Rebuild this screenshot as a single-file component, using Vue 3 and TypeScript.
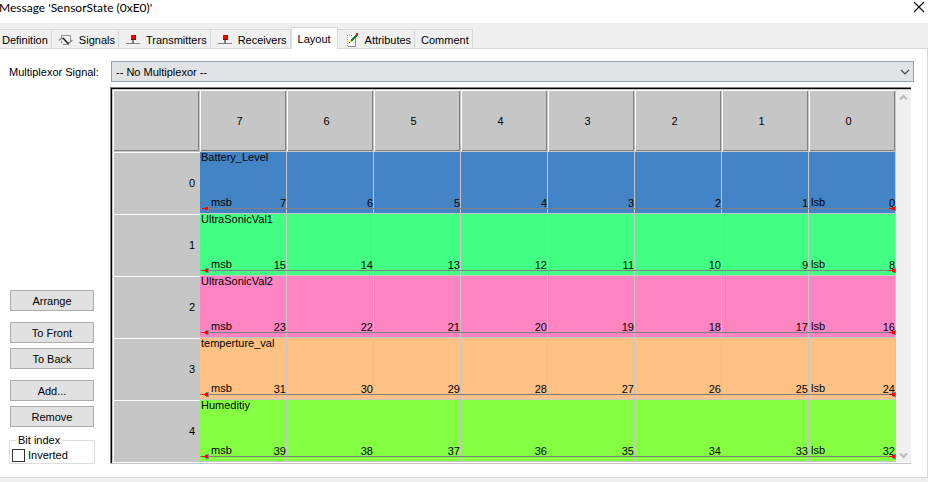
<script setup lang="ts">
import { ref } from 'vue'

interface Tab { id: string; label: string; icon?: 'wave' | 'node' | 'note' }
interface Signal { name: string; color: string }

const tabs: Tab[] = [
  { id: 'definition', label: 'Definition' },
  { id: 'signals', label: 'Signals', icon: 'wave' },
  { id: 'transmitters', label: 'Transmitters', icon: 'node' },
  { id: 'receivers', label: 'Receivers', icon: 'node' },
  { id: 'layout', label: 'Layout' },
  { id: 'attributes', label: 'Attributes', icon: 'note' },
  { id: 'comment', label: 'Comment' },
]
const active = ref('layout')
const multiplexor = ref('none')
const inverted = ref(false)

const bits = [7, 6, 5, 4, 3, 2, 1, 0]
const signals: Signal[] = [
  { name: 'Battery_Level', color: '#4284c6' },
  { name: 'UltraSonicVal1', color: '#42ff84' },
  { name: 'UltraSonicVal2', color: '#ff84c2' },
  { name: 'temperture_val', color: '#ffc284' },
  { name: 'Humeditiy', color: '#84ff42' },
]
</script>

<template>
  <div class="dialog">
    <header class="titlebar">
      <h1>Message 'SensorState (0xE0)'</h1>
      <button class="close" type="button" aria-label="Close">
        <svg width="12" height="12" viewBox="0 0 12 12"><path d="M1 1 11 11M11 1 1 11" stroke="#111" stroke-width="1.2" fill="none" /></svg>
      </button>
    </header>

    <nav class="tabs" role="tablist">
      <button
        v-for="t in tabs" :key="t.id" type="button" role="tab"
        :class="['tab', 'tab-' + t.id, { active: active === t.id }]"
        :aria-selected="active === t.id" @click="active = t.id"
      >
        <svg v-if="t.icon === 'wave'" class="icon" width="16" height="16" viewBox="0 0 16 16" fill="none">
          <path d="M3.5 6V3.5h9V9M5 12.5h6M3.5 9v2" stroke="#8c8c8c" />
          <path d="M1 8.500 3 6.500H5" stroke="#8c8c8c" stroke-width="1.500" />
          <path d="M4.500 6.500h1L9.500 11h1.500" stroke="#222" stroke-width="1.500" />
          <path d="M11 11 14.500 8" stroke="#8c8c8c" stroke-width="1.500" />
        </svg>
        <svg v-else-if="t.icon === 'node'" class="icon" width="16" height="16" viewBox="0 0 16 16" shape-rendering="crispEdges">
          <path d="M1 11h14v1H1zM7 8h2v3H7z" fill="#808080" />
          <path d="M6 3h5v5H6z" fill="#900000" />
          <path d="M6 3h4v4H6z" fill="#f00" />
        </svg>
        <svg v-else-if="t.icon === 'note'" class="icon" width="16" height="16" viewBox="0 0 16 16" shape-rendering="crispEdges">
          <path d="M3 3h9v11H3z" fill="#fff" />
          <path d="M11 6h1v9H4v-1h7z" fill="#909090" />
          <path d="M3 3h1v1H3zM5 3h1v1H5zM7 3h1v1H7zM3 5h1v1H3zM3 7h1v1H3zM3 9h1v1H3zM3 11h1v1H3zM3 13h1v1H3z" fill="#909090" />
          <path d="M7 7h1V6h1V5h1V4h1V3h1V2h2v2h-1v1h-1v1h-1v1h-1v1H9v1H7z" fill="#158015" />
          <path d="M6 8h1v1h1v1H6z" fill="#dede00" />
          <path d="M5 10h1v1H5z" fill="#303030" />
          <path d="M12 1h2v2h-2z" fill="#d02020" />
        </svg>
        <span>{{ t.label }}</span>
      </button>
    </nav>

    <main class="page">
      <div class="mux">
        <label for="mux">Multiplexor Signal:</label>
        <div class="select">
          <select id="mux" v-model="multiplexor">
            <option value="none">-- No Multiplexor --</option>
          </select>
          <svg width="10" height="6" viewBox="0 0 10 6"><path d="M1 1 5 5 9 1" stroke="#444" stroke-width="1.2" fill="none" /></svg>
        </div>
      </div>

      <div class="content">
        <aside class="actions">
          <div class="group"><button type="button">Arrange</button></div>
          <div class="group">
            <button type="button">To Front</button>
            <button type="button">To Back</button>
          </div>
          <div class="group">
            <button type="button">Add...</button>
            <button type="button">Remove</button>
          </div>
          <fieldset>
            <legend>Bit index</legend>
            <label class="check"><input v-model="inverted" type="checkbox"><span>Inverted</span></label>
          </fieldset>
        </aside>

        <div class="frame">
          <table>
            <thead>
              <tr>
                <th class="head"></th>
                <th v-for="b in bits" :key="b" class="head" scope="col">{{ b }}</th>
              </tr>
            </thead>
            <tbody>
              <tr v-for="(s, row) in signals" :key="s.name">
                <th class="rowhead" scope="row">{{ row }}</th>
                <td v-for="b in bits" :key="b" :style="{ backgroundColor: s.color }">
                  <div class="cell">
                    <span class="name">{{ b === 7 ? s.name : '' }}</span>
                    <div class="foot">
                      <span class="edge">{{ b === 7 ? 'msb' : b === 0 ? 'lsb' : '' }}</span>
                      <span class="bit">{{ row * 8 + b }}</span>
                    </div>
                  </div>
                  <svg v-if="b === 7 || b === 0" :class="['mark', b === 7 ? 'start' : 'end']" width="8" height="5" viewBox="0 0 8 5" shape-rendering="crispEdges">
                    <path d="M5 0h3v5H5z" fill="#808080" />
                    <path d="M1 2h3V1h3v3H4V3H1z" fill="#f00" />
                  </svg>
                </td>
              </tr>
            </tbody>
          </table>
          <div class="scrollbar">
            <svg width="9" height="7" viewBox="0 0 9 7"><path d="M1 5.500 4.500 2 8 5.500" stroke="#bcbcbc" stroke-width="2.200" fill="none" /></svg>
            <svg width="9" height="7" viewBox="0 0 9 7"><path d="M1 1.500 4.500 5 8 1.500" stroke="#bcbcbc" stroke-width="2.200" fill="none" /></svg>
          </div>
        </div>
      </div>
    </main>
  </div>
</template>

<style>
body { margin: 0; background: #f0f0f0; }
</style>

<style scoped>
* { box-sizing: border-box; }
.dialog { font: 11px/14px "Liberation Sans", Arial, sans-serif; color: #000; overflow: hidden; }
button, select, input { font: inherit; color: inherit; margin: 0; }
.titlebar { display: flex; justify-content: space-between; height: 23px; background: #fff; padding-right: 3px; }
h1 { margin: 0 0 0 -1px; font: 12px/16px Lato, "Open Sans", sans-serif; white-space: nowrap; }
.close { display: flex; align-items: center; padding: 0; border: 0; background: none; height: 14px; }

.tabs { display: flex; align-items: flex-end; height: 25px; padding-top: 4px; background: #f0f0f0; }
.tab {
  display: flex; align-items: center; gap: 5px; height: 19px; padding: 2px 3px 0 6px;
  border: 1px solid #d9d9d9; border-width: 1px 1px 0 0; background: #f0f0f0; white-space: nowrap;
}
.tab-definition { padding-left: 2px; }
.tab.active { height: 22px; margin-bottom: -1px; padding: 0 6px; border-left-width: 1px; background: #fff; position: relative; z-index: 1; }
.icon { flex: none; }

.page { background: #fff; border: 1px solid #d9d9d9; border-left: 0; padding: 12px 13px 13px 9px; }
.mux { display: grid; grid-template-columns: 102px 1fr; align-items: center; white-space: nowrap; }
.select { display: grid; align-items: center; }
.select > * { grid-area: 1 / 1; }
.select svg { justify-self: end; margin-right: 4px; pointer-events: none; }
select { appearance: none; width: 100%; height: 21px; padding: 0 20px 0 4px; border: 1px solid #8fa3b5; border-radius: 0; background: #e1e3e5; }

.content { display: grid; grid-template-columns: 86px 1fr; column-gap: 15px; margin: 5px 3px 0 0; }
.actions { display: flex; flex-direction: column; justify-content: flex-end; gap: 11px; }
.group { display: flex; flex-direction: column; gap: 5px; padding: 0 1px; }
.group button { height: 21px; padding: 0; border: 1px solid #adadad; background: #e1e1e1; }
fieldset { margin: -5px 0 0; padding: 1px 3px 1px 2px; border: 1px solid #dcdcdc; min-width: 0; }
legend { padding: 0 2px; margin-left: 4px; }
.check { display: flex; align-items: center; gap: 3px; }
.check input { appearance: none; width: 13px; height: 13px; border: 1px solid #333; background: #fff; }
.check input:checked { background: #333; }

.frame {
  display: grid; grid-template-columns: 1fr 15px; background: #c6c6c6;
  border-top: 1px solid #808080; border-left: 1px solid #808080; border-bottom: 1px solid #c6c6c6;
  box-shadow: inset 1px 1px #000, inset 0 -1px #fff; padding: 2px 0 1px 2px;
}
table { width: 100%; table-layout: fixed; border-collapse: separate; border-spacing: 0; }
th, td { height: 62px; padding: 0; font-weight: normal; }
.head { border: 1px solid #fff; border-right: 1px solid #c6c6c6; border-bottom-color: #c6c6c6; box-shadow: inset -1px -1px #808080; padding-right: 8px; }
.rowhead { text-align: right; border-top: 1px solid #fff; border-left: 1px solid #fff; padding: 0 5px 2px 0; }
td { position: relative; border-right: 1px solid #c6c6c6; border-bottom: 1px solid #c6c6c6; }
.cell { display: flex; flex-direction: column; justify-content: space-between; height: 61px; padding-bottom: 4px; }
.name { height: 10px; line-height: 10px; padding-left: 1px; white-space: nowrap; }
.foot { display: flex; justify-content: space-between; line-height: 12px; border-bottom: 1px solid #808080; margin-right: -1px; padding: 0 1px 0 2px; }
.bit { line-height: 10px; align-self: flex-end; }
td:nth-child(2) .edge { padding-left: 9px; }
.mark { position: absolute; bottom: 2px; }
.start { left: 1px; }
.end { right: -1px; }
.scrollbar { display: flex; flex-direction: column; justify-content: space-between; align-items: center; background: #f0f0f0; padding: 4px 0 3px; }
</style>
